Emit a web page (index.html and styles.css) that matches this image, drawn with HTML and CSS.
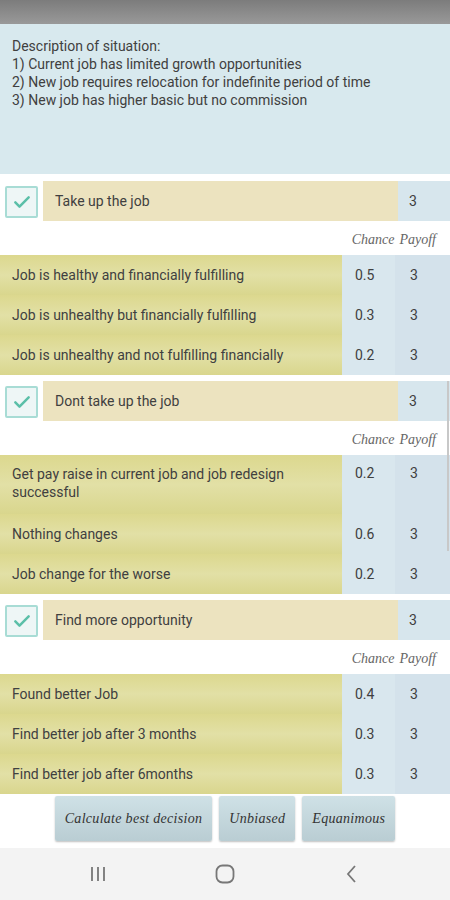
FILE: index.html
```html
<!DOCTYPE html>
<html lang="en">
<head>
    <meta charset="UTF-8">
    <meta name="viewport" content="width=device-width, initial-scale=1.0">
    <title>Decision</title>
    <link rel="stylesheet" href="styles.css">
</head>
<body>
    <div class="status-bar"></div>

    <!-- Situation -->
    <div class="description">
        Description of situation:<br>
        1) Current job has limited growth opportunities<br>
        2) New job requires relocation for indefinite period of time<br>
        3) New job has higher basic but no commission
    </div>

    <div class="decisions">
        <div class="decision">
            <div class="decision-row">
                <div class="check">
                    <svg viewBox="0 0 24 24" width="20" height="20"><path d="M4 12.5l5 5L20 6.5" fill="none" stroke="#5bbfa8" stroke-width="3" stroke-linecap="round" stroke-linejoin="round"/></svg>
                </div>
                <div class="decision-title">Take up the job</div>
                <div class="decision-payoff">3</div>
            </div>
            <div class="col-head"><span>Chance</span><span>Payoff</span></div>
            <div class="outcome">
                <div class="outcome-label">Job is healthy and financially fulfilling</div>
                <div class="outcome-chance">0.5</div>
                <div class="outcome-payoff">3</div>
            </div>
            <div class="outcome">
                <div class="outcome-label">Job is unhealthy but financially fulfilling</div>
                <div class="outcome-chance">0.3</div>
                <div class="outcome-payoff">3</div>
            </div>
            <div class="outcome">
                <div class="outcome-label">Job is unhealthy and not fulfilling financially</div>
                <div class="outcome-chance">0.2</div>
                <div class="outcome-payoff">3</div>
            </div>
        </div>

        <div class="decision">
            <div class="decision-row">
                <div class="check">
                    <svg viewBox="0 0 24 24" width="20" height="20"><path d="M4 12.5l5 5L20 6.5" fill="none" stroke="#5bbfa8" stroke-width="3" stroke-linecap="round" stroke-linejoin="round"/></svg>
                </div>
                <div class="decision-title">Dont take up the job</div>
                <div class="decision-payoff">3</div>
            </div>
            <div class="col-head"><span>Chance</span><span>Payoff</span></div>
            <div class="outcome tall">
                <div class="outcome-label">Get pay raise in current job and job redesign successful</div>
                <div class="outcome-chance">0.2</div>
                <div class="outcome-payoff">3</div>
            </div>
            <div class="outcome">
                <div class="outcome-label">Nothing changes</div>
                <div class="outcome-chance">0.6</div>
                <div class="outcome-payoff">3</div>
            </div>
            <div class="outcome">
                <div class="outcome-label">Job change for the worse</div>
                <div class="outcome-chance">0.2</div>
                <div class="outcome-payoff">3</div>
            </div>
        </div>

        <div class="decision">
            <div class="decision-row">
                <div class="check">
                    <svg viewBox="0 0 24 24" width="20" height="20"><path d="M4 12.5l5 5L20 6.5" fill="none" stroke="#5bbfa8" stroke-width="3" stroke-linecap="round" stroke-linejoin="round"/></svg>
                </div>
                <div class="decision-title">Find more opportunity</div>
                <div class="decision-payoff">3</div>
            </div>
            <div class="col-head"><span>Chance</span><span>Payoff</span></div>
            <div class="outcome">
                <div class="outcome-label">Found better Job</div>
                <div class="outcome-chance">0.4</div>
                <div class="outcome-payoff">3</div>
            </div>
            <div class="outcome">
                <div class="outcome-label">Find better job after 3 months</div>
                <div class="outcome-chance">0.3</div>
                <div class="outcome-payoff">3</div>
            </div>
            <div class="outcome">
                <div class="outcome-label">Find better job after 6months</div>
                <div class="outcome-chance">0.3</div>
                <div class="outcome-payoff">3</div>
            </div>
        </div>

        <div class="scrollbar"></div>
    </div>

    <div class="actions">
        <button class="action-btn">Calculate best decision</button>
        <button class="action-btn">Unbiased</button>
        <button class="action-btn">Equanimous</button>
    </div>

    <!-- Android navigation -->
    <div class="nav-bar">
        <svg width="20" height="20" viewBox="0 0 20 20"><path d="M4 3v14M10 3v14M16 3v14" stroke="#777" stroke-width="1.8"/></svg>
        <svg width="20" height="20" viewBox="0 0 20 20"><rect x="1.5" y="1.5" width="17" height="17" rx="6" fill="none" stroke="#777" stroke-width="1.8"/></svg>
        <svg width="20" height="20" viewBox="0 0 20 20"><path d="M13 2L6 10l7 8" fill="none" stroke="#777" stroke-width="1.8"/></svg>
    </div>
</body>
</html>
```

FILE: styles.css
```css
* {
    margin: 0;
    padding: 0;
    box-sizing: border-box;
}

body {
    font-family: Roboto, "Noto Sans", sans-serif;
    font-size: 14px;
    color: #404040;
    background: #fff;
    width: 450px;
    height: 900px;
    overflow: hidden;
}

.status-bar {
    height: 24px;
    background: linear-gradient(to bottom, #7c7c7c, #999);
}

.description {
    height: 150px;
    background: #d8e9ee;
    padding: 13px 12px;
    line-height: 18px;
}

.decisions {
    position: relative;
    display: flex;
    flex-direction: column;
    gap: 6px;
    padding-top: 7px;
}

/* Decision header row */
.decision-row {
    display: flex;
    height: 40px;
}

.check {
    width: 33px;
    height: 32px;
    margin: 5px 5px 0 5px;
    border: 2px solid #a8dcd5;
    border-radius: 2px;
    background: #eef6f6;
    display: flex;
    align-items: center;
    justify-content: center;
}

.decision-title {
    flex: 1;
    background: #ece3bf;
    padding-left: 12px;
    display: flex;
    align-items: center;
}

.decision-payoff {
    width: 52px;
    background: #d7e6ed;
    padding-left: 11px;
    display: flex;
    align-items: center;
}

.col-head {
    height: 34px;
    display: flex;
    justify-content: flex-end;
    align-items: center;
    gap: 5px;
    padding: 4px 14px 0 0;
    font-family: "Liberation Serif", serif;
    font-style: italic;
    font-size: 14px;
    color: #666;
}

/* Outcome rows */
.outcome {
    display: flex;
    height: 40px;
}

.outcome.tall {
    height: 59px;
}

.outcome-label {
    flex: 1;
    background: linear-gradient(to bottom, #dcd88e, #e2e0a6 50%, #d9d68d);
    padding: 0 12px;
    display: flex;
    align-items: center;
    line-height: 18px;
}

.outcome.tall .outcome-label {
    align-items: flex-start;
    padding-top: 10px;
}

.outcome-chance {
    width: 53px;
    background: #d9e7ee;
    padding-left: 13px;
    display: flex;
    align-items: center;
}

.outcome-payoff {
    width: 55px;
    background: #d4e2eb;
    padding-left: 15px;
    display: flex;
    align-items: center;
}

.outcome.tall .outcome-chance,
.outcome.tall .outcome-payoff {
    align-items: flex-start;
    padding-top: 10px;
}

.scrollbar {
    position: absolute;
    right: 1px;
    top: 207px;
    width: 2px;
    height: 170px;
    background: #c8c8c8;
}

/* Bottom buttons */
.actions {
    display: flex;
    justify-content: center;
    gap: 7px;
    padding-top: 2px;
    height: 54px;
}

.action-btn {
    height: 45px;
    padding: 0 10px;
    border: none;
    border-radius: 2px;
    background: linear-gradient(to bottom, #cfe1e6, #b9cdd3);
    box-shadow: 0 1px 2px rgba(0, 0, 0, 0.25);
    font-family: "Liberation Serif", serif;
    font-style: italic;
    font-size: 14px;
    letter-spacing: 0.3px;
    color: #333;
}

.nav-bar {
    height: 52px;
    background: #f3f3f3;
    display: flex;
    justify-content: center;
    align-items: center;
    gap: 107px;
}
```
